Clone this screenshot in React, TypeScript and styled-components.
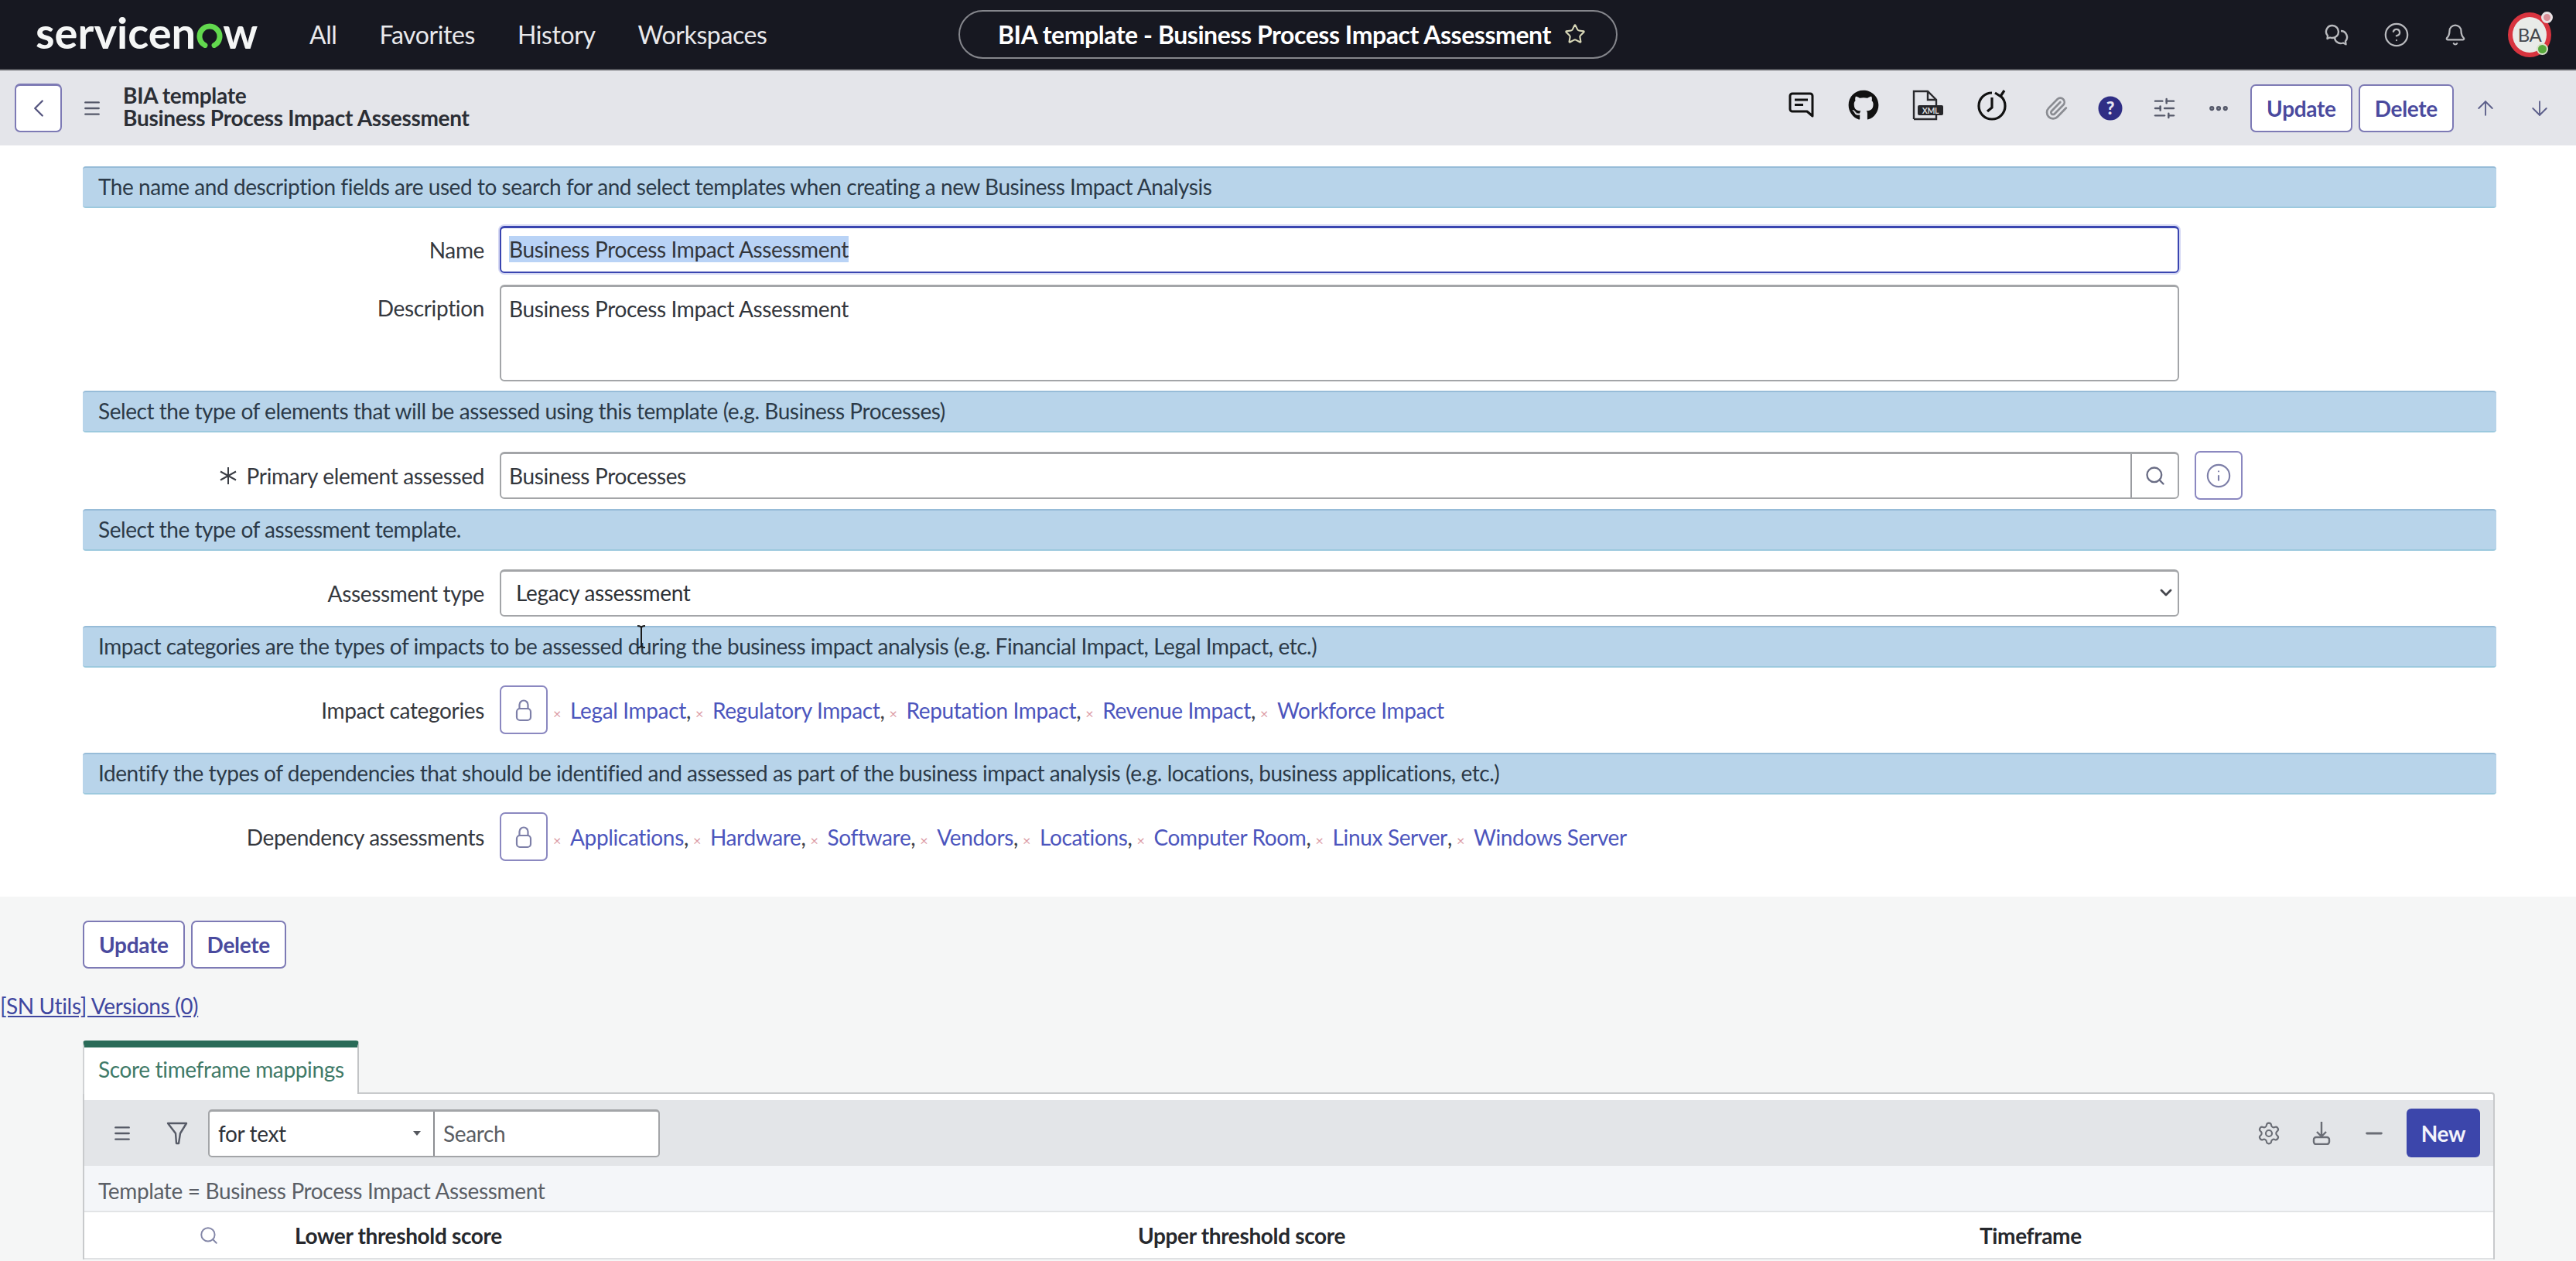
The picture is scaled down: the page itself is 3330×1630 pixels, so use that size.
import React from "react";
import styled, { createGlobalStyle } from "styled-components";
import { ArrowDown, ArrowUp, Bell, ChevronDown, ChevronLeft, CircleHelp, Ellipsis, Info, Menu, Minus, Paperclip, Search, Settings, SlidersHorizontal, Star } from "lucide-react";
import { FaGithub } from "react-icons/fa";

const GlobalStyle = createGlobalStyle`
    html, body {
        margin: 0;
        padding: 0;
        background: #fff;
        overflow: hidden;
    }
    * { box-sizing: border-box; }
    body {
        font-family: Lato, "Noto Sans", "Liberation Sans", sans-serif;
    }
`;

const Page = styled.div`
    position: relative;
    width: 3330px;
    height: 1630px;
    overflow: hidden;
    background: #fff;
    font-size: 28px;
    letter-spacing: -0.35px;
    color: #2e3238;
`;

/* top bar */
const TopBar = styled.header`
    height: 91px;
    background: #171821;
    color: #fff;
    display: grid;
    grid-template-columns: 1fr 852px 1fr;
    align-items: center;
    border-bottom: 2px solid #55565c;
`;

const TopLeft = styled.div`
    display: flex;
    align-items: center;
    padding-left: 46px;
`;

const Logo = styled.div`
    display: flex;
    align-items: center;
    width: 354px;
    font-size: 56px;
    font-weight: 700;
    letter-spacing: 0;
    line-height: 1;
    margin-top: -6px;
    color: #f5f6f6;
`;

const LogoO = styled.svg`
    width: 34px;
    height: 32px;
    margin: 9px 0 0 1px;
`;

const TopNav = styled.nav`
    display: flex;
    gap: 55px;
    font-size: 32px;
    letter-spacing: -0.4px;
    color: #e9e9ec;
`;

const Pill = styled.div`
    height: 63px;
    border: 2px solid #85868c;
    border-radius: 32px;
    display: flex;
    align-items: center;
    padding-left: 49px;
    gap: 17px;
    font-size: 32px;
    font-weight: 700;
    letter-spacing: -0.45px;
    margin-top: -1px;
`;

const TopRight = styled.div`
    display: flex;
    align-items: center;
    justify-content: flex-end;
    gap: 44px;
    padding-right: 32px;
    color: #b9babe;
`;

const Avatar = styled.div`
    position: relative;
    width: 56px;
    height: 58px;
    margin-left: 9px;
    border-radius: 50%;
    border: 6px solid #d8343f;
    background: #e9ebe8;
    color: #44474c;
    font-size: 24px;
    letter-spacing: -0.5px;
    display: flex;
    align-items: center;
    justify-content: center;
`;

const AvatarDot = styled.span`
    position: absolute;
    right: -2px;
    bottom: -3px;
    width: 15px;
    height: 15px;
    border-radius: 50%;
    background: #57a83c;
    border: 2px solid #d7e2c8;
`;

const AvatarTag = styled.span`
    position: absolute;
    right: -8px;
    top: -7px;
    width: 15px;
    height: 15px;
    border-radius: 50%;
    background: #d98f98;
    border: 3px solid #e9e2e4;
`;

/* form header */
const SubHeader = styled.div`
    height: 97px;
    background: #e4e5ea;
    display: flex;
    align-items: center;
    padding: 0 32px 0 19px;
`;

const BackButton = styled.button`
    width: 61px;
    height: 63px;
    padding: 0;
    background: #fff;
    border: 2px solid #7d7ab5;
    border-top-width: 3px;
    border-radius: 7px;
    color: #55557f;
    display: flex;
    align-items: center;
    justify-content: center;
`;

const TitleBlock = styled.div`
    font-weight: 700;
    line-height: 29px;
    margin: -3px 0 0 27px;
    font-size: 28px;
    letter-spacing: -0.3px;
    color: #2b2e35;
`;

const HamburgerHolder = styled.span`
    display: flex;
    margin-left: 26px;
    color: #55596a;
`;

const Spacer = styled.div`
    flex: 1;
`;

const ToolIcons = styled.div`
    display: flex;
    align-items: center;
    color: #111;
    margin-right: 6px;
`;

const ToolIcon = styled.span<{ $w: number; $color?: string; $lift?: boolean }>`
    width: ${(p) => p.$w}px;
    display: flex;
    justify-content: center;
    color: ${(p) => p.$color ?? "#111"};
    margin-top: ${(p) => (p.$lift ? -8 : 0)}px;
`;

const OutlineButton = styled.button`
    height: 62px;
    padding: 0 19px;
    background: #fff;
    border: 2px solid #7d7ab5;
    border-radius: 7px;
    color: #4a4a9e;
    font-family: inherit;
    font-size: 28px;
    font-weight: 700;
    letter-spacing: -0.3px;
`;

const ButtonPair = styled.div`
    display: flex;
    gap: 8px;
`;

const ArrowPair = styled.div`
    display: flex;
    gap: 40px;
    margin-left: 26px;
    color: #5c5f8a;
`;

/* form body */
const FormBody = styled.main`
    padding: 27px 103px 22px 107px;
    background: #fff;
`;

const Banner = styled.div`
    height: 54px;
    display: flex;
    align-items: center;
    padding: 0 0 2px 20px;
    background: #b8d4ea;
    border-radius: 4px;
    border-top: 2px solid #97bcd8;
    border-bottom: 2px solid #9cc9de;
    color: #2c3a48;
    letter-spacing: -0.45px;
`;

const Row = styled.div<{ $mt?: number; $mb?: number }>`
    display: grid;
    grid-template-columns: 519px 2171px auto;
    column-gap: 20px;
    align-items: center;
    margin: ${(p) => p.$mt ?? 24}px 0 ${(p) => p.$mb ?? 12}px;
`;

const Label = styled.label<{ $top?: boolean }>`
    text-align: right;
    color: #35383e;
    align-self: ${(p) => (p.$top ? "start" : "center")};
    padding-top: ${(p) => (p.$top ? 13 : 0)}px;
    display: flex;
    justify-content: flex-end;
    align-items: center;
    gap: 12px;
`;

const Field = styled.div<{ $focus?: boolean; $h?: number; $top?: boolean }>`
    height: ${(p) => p.$h ?? 61}px;
    background: #fff;
    border: 2px solid ${(p) => (p.$focus ? "#3a45b0" : "#a3a5a8")};
    border-top-width: 3px;
    border-radius: 6px;
    padding: ${(p) => (p.$top ? "11px" : "0")} 10px ${(p) => (p.$top ? "0" : "2px")};
    display: flex;
    align-items: ${(p) => (p.$top ? "flex-start" : "center")};
    color: #33363c;
    box-shadow: ${(p) => (p.$focus ? "0 0 0 2px #d5d8f4" : "none")};
`;

const Selected = styled.span`
    background: #b9d3f6;
`;

const LookupField = styled(Field)`
    padding-right: 0;
    padding-bottom: 0;
    justify-content: space-between;
`;

const LookupButton = styled.span`
    width: 61px;
    height: 100%;
    border-left: 2px solid #9a9ca0;
    display: flex;
    align-items: center;
    justify-content: center;
    color: #6a6d85;
`;

const SelectField = styled(Field)`
    justify-content: space-between;
    padding-left: 19px;
    padding-right: 3px;
    color: #2e3136;
`;

const IconButton = styled.button`
    width: 62px;
    height: 63px;
    padding: 0;
    background: #fff;
    border: 2px solid #8b88c0;
    border-radius: 7px;
    color: #7d7fa8;
    display: flex;
    align-items: center;
    justify-content: center;
`;

const ListRow = styled.div`
    display: grid;
    grid-template-columns: 519px auto 1fr;
    column-gap: 20px;
    align-items: center;
    margin: 23px 0 24px;
`;

const Tags = styled.div`
    display: flex;
    align-items: center;
    margin-left: -13px;
`;

const Tag = styled.span`
    display: flex;
    align-items: baseline;
    color: #4c55bd;
    white-space: nowrap;
`;

const TagX = styled.span`
    color: #dc9ca6;
    font-size: 18px;
    width: 22px;
`;

const TagComma = styled.span`
    color: #3c3f48;
    width: 11px;
    margin-right: 1px;
`;

/* related list */
const Lower = styled.section`
    background: #f5f6f6;
    height: 500px;
    padding-top: 31px;
`;

const LowerButtons = styled(ButtonPair)`
    padding-left: 107px;
`;

const VersionsLink = styled.a`
    display: block;
    margin-top: 32px;
    color: #3f47a0;
    text-decoration: underline;
    line-height: 32px;
`;

const TabArea = styled.div`
    margin: 29px 0 0 107px;
    width: 3118px;
`;

const Tab = styled.div`
    width: 357px;
    height: 69px;
    background: #fff;
    border-top: 9px solid #2a6b58;
    border-left: 2px solid #d0d2d4;
    border-right: 2px solid #c2c4c6;
    border-radius: 4px 4px 0 0;
    margin-bottom: -2px;
    position: relative;
    z-index: 1;
    display: flex;
    align-items: center;
    padding: 0 0 4px 18px;
    color: #3f7a68;
`;

const Panel = styled.div`
    background: #fff;
    border: 2px solid #c8cacc;
    border-bottom: none;
    border-radius: 0 4px 0 0;
    padding-top: 8px;
`;

const ListToolbar = styled.div`
    height: 85px;
    background: #e3e5e8;
    display: flex;
    align-items: center;
    padding: 0 17px 0 36px;
    color: #565a66;
`;

const FilterHolder = styled.span`
    display: flex;
    margin-left: 44px;
`;

const SearchCombo = styled.div`
    display: flex;
    width: 584px;
    height: 62px;
    margin-left: 26px;
    background: #fff;
    border: 2px solid #a3a5a8;
    border-top-width: 3px;
    border-radius: 5px;
`;

const ForText = styled.div`
    width: 291px;
    border-right: 2px solid #8c8e92;
    display: flex;
    align-items: center;
    justify-content: space-between;
    padding: 0 16px 0 11px;
    color: #2f3238;
`;

const Caret = styled.span`
    width: 0;
    height: 0;
    border-left: 5px solid transparent;
    border-right: 5px solid transparent;
    border-top: 6px solid #55585e;
`;

const SearchText = styled.div`
    padding-left: 11px;
    display: flex;
    align-items: center;
    color: #5a5d63;
`;

const ToolbarIcons = styled.div`
    display: flex;
    align-items: center;
    gap: 40px;
    margin-right: 26px;
    color: #6a6d75;
`;

const NewButton = styled.button`
    width: 95px;
    height: 63px;
    background: #3c46ab;
    border: none;
    border-radius: 6px;
    color: #f2f3fb;
    font-family: inherit;
    font-size: 28px;
    font-weight: 700;
    letter-spacing: -0.3px;
`;

const Breadcrumb = styled.div`
    height: 60px;
    background: #f4f6f9;
    display: flex;
    align-items: center;
    padding: 5px 0 0 18px;
    border-bottom: 2px solid #e2e4e6;
    color: #5b5f66;
`;

const ColumnHead = styled.div`
    height: 61px;
    display: grid;
    grid-template-columns: 272px 1090px 1088px 1fr;
    align-items: center;
    border-bottom: 2px solid #dfe1e3;
    font-weight: 700;
    color: #26282d;
`;

const ColumnSearch = styled.span`
    justify-self: end;
    margin-right: 98px;
    display: flex;
    color: #8487a8;
`;

const IBeam = styled.svg`
    position: absolute;
    left: 823px;
    top: 808px;
`;

function ChatIcon() {
    return (
        <svg width="32" height="28" viewBox="0 0 32 28" fill="none" stroke="currentColor" strokeWidth="2.400" strokeLinejoin="round">
            <path d="M10 2a8 8 0 0 0-6 13.300L3.500 19l3.500-1.500a8 8 0 0 0 3 .5 8 8 0 0 0 0-16z" />
            <path d="M21 9a8 8 0 0 1 6 13.300l.5 4-3.500-1.800a8 8 0 0 1-11-7" />
        </svg>
    );
}

function CommentIcon() {
    return (
        <svg width="33" height="33" viewBox="0 0 33 33" fill="none" stroke="currentColor" strokeWidth="3">
            <path d="M5 2h23a3 3 0 0 1 3 3v26l-7-6H5a3 3 0 0 1-3-3V5a3 3 0 0 1 3-3z" strokeLinejoin="round" />
            <path d="M8 10h17M8 16.500h11" strokeWidth="2.800" />
        </svg>
    );
}

function XmlIcon() {
    return (
        <svg width="40" height="40" viewBox="0 0 40 40" fill="none" stroke="#2a2a2e" strokeWidth="2.400">
            <path d="M2 38V2h18l11 11v9M20 2v11h11M2 38h29v-6" />
            <rect x="7" y="20" width="33" height="13" fill="#26262a" rx="2" stroke="none" />
            <text x="23.500" y="30.500" textAnchor="middle" fontSize="10.500" fontWeight="700" fill="#d8d8dc" stroke="none" fontFamily="Lato, sans-serif">XML</text>
        </svg>
    );
}

function HistoryIcon() {
    return (
        <svg width="40" height="40" viewBox="0 0 40 40" fill="none" stroke="#111" strokeWidth="3.200">
            <path d="M20 4A17 17 0 1 0 37 21 17 17 0 0 0 31 8" />
            <path d="M24 4l7 4.500L36 1" strokeLinejoin="round" />
            <path d="M20 10v13l-6 5" />
        </svg>
    );
}

function HelpBadge() {
    return (
        <svg width="32" height="34" viewBox="0 0 32 34">
            <circle cx="16" cy="17" r="15.500" fill="#2f2e85" />
            <text x="16" y="25" textAnchor="middle" fontSize="23" fontWeight="900" fill="#e6e6f3" fontFamily="Lato, sans-serif">?</text>
        </svg>
    );
}

function LockIcon() {
    return (
        <svg width="30" height="32" viewBox="0 0 30 32" fill="none" stroke="currentColor" strokeWidth="2.200">
            <rect x="6" y="14" width="18" height="15" rx="4" />
            <path d="M9.500 14V9a5.500 5.500 0 0 1 11 0v5" />
        </svg>
    );
}

function FunnelIcon() {
    return (
        <svg width="28" height="30" viewBox="0 0 28 30" fill="none" stroke="currentColor" strokeWidth="2.400" strokeLinejoin="round">
            <path d="M2 2h24L18 15l-2 13h-3l-1-13z" />
        </svg>
    );
}

function DownloadTray() {
    return (
        <svg width="24" height="30" viewBox="0 0 24 30" fill="none" stroke="currentColor" strokeWidth="2.400">
            <path d="M12 0v19M6 13l6 6 6-6" />
            <rect x="2" y="20" width="20" height="9" rx="3" />
        </svg>
    );
}

const impactTags = ["Legal Impact", "Regulatory Impact", "Reputation Impact", "Revenue Impact", "Workforce Impact"];
const dependencyTags = ["Applications", "Hardware", "Software", "Vendors", "Locations", "Computer Room", "Linux Server", "Windows Server"];

function TagList({ items }: { items: string[] }) {
    return (
        <Tags>
            {items.map((t, i) => (
                <Tag key={t}>
                    <TagX>×</TagX>
                    {t}
                    {i < items.length - 1 && <TagComma>,</TagComma>}
                </Tag>
            ))}
        </Tags>
    );
}

export default function App() {
    return (
        <Page>
            <GlobalStyle />
            <TopBar>
                <TopLeft>
                    <Logo>
                        servicen
                        <LogoO viewBox="0 0 34 32" fill="none">
                            <path d="M10.900 28.500A13 13 0 1 1 23.100 28.500" stroke="#62d84e" strokeWidth="7" strokeLinecap="round" />
                        </LogoO>
                        w
                    </Logo>
                    <TopNav>
                        <span>All</span>
                        <span>Favorites</span>
                        <span>History</span>
                        <span>Workspaces</span>
                    </TopNav>
                </TopLeft>
                <Pill>
                    BIA template - Business Process Impact Assessment
                    <Star size={28} color="#d9d8b8" strokeWidth={1.800} />
                </Pill>
                <TopRight>
                    <ChatIcon />
                    <CircleHelp size={34} strokeWidth={1.600} />
                    <Bell size={30} strokeWidth={1.800} />
                    <Avatar>
                        BA
                        <AvatarTag />
                        <AvatarDot />
                    </Avatar>
                </TopRight>
            </TopBar>

            <SubHeader>
                <BackButton aria-label="Back">
                    <ChevronLeft size={38} strokeWidth={1.500} />
                </BackButton>
                <HamburgerHolder>
                    <Menu size={26} strokeWidth={2.200} />
                </HamburgerHolder>
                <TitleBlock>
                    BIA template
                    <br />
                    Business Process Impact Assessment
                </TitleBlock>
                <Spacer />
                <ToolIcons>
                    <ToolIcon $w={66} $lift><CommentIcon /></ToolIcon>
                    <ToolIcon $w={96} $lift><FaGithub size={40} /></ToolIcon>
                    <ToolIcon $w={70} $lift><XmlIcon /></ToolIcon>
                    <ToolIcon $w={96} $lift><HistoryIcon /></ToolIcon>
                    <ToolIcon $w={70} $color="#8a8c92"><Paperclip size={32} strokeWidth={2} /></ToolIcon>
                    <ToolIcon $w={70}><HelpBadge /></ToolIcon>
                    <ToolIcon $w={70} $color="#55596a"><SlidersHorizontal size={32} strokeWidth={1.800} /></ToolIcon>
                    <ToolIcon $w={70} $color="#55596a"><Ellipsis size={30} strokeWidth={3} /></ToolIcon>
                </ToolIcons>
                <ButtonPair>
                    <OutlineButton>Update</OutlineButton>
                    <OutlineButton>Delete</OutlineButton>
                </ButtonPair>
                <ArrowPair>
                    <ArrowUp size={30} strokeWidth={1.500} />
                    <ArrowDown size={30} strokeWidth={1.500} />
                </ArrowPair>
            </SubHeader>

            <FormBody>
                <Banner>The name and description fields are used to search for and select templates when creating a new Business Impact Analysis</Banner>
                <Row $mt={23} $mb={15}>
                    <Label>Name</Label>
                    <Field $focus>
                        <Selected>Business Process Impact Assessment</Selected>
                    </Field>
                </Row>
                <Row $mt={15} $mb={12}>
                    <Label $top>Description</Label>
                    <Field $h={125} $top>Business Process Impact Assessment</Field>
                </Row>
                <Banner>Select the type of elements that will be assessed using this template (e.g. Business Processes)</Banner>
                <Row>
                    <Label>
                        <svg width="24" height="24" viewBox="0 0 24 24" stroke="#3a3d44" strokeWidth="2">
                            <path d="M12 1v22M2 6.500l20 11M22 6.500l-20 11" />
                        </svg>
                        Primary element assessed
                    </Label>
                    <LookupField>
                        Business Processes
                        <LookupButton>
                            <Search size={28} strokeWidth={2} />
                        </LookupButton>
                    </LookupField>
                    <IconButton aria-label="Info">
                        <Info size={34} strokeWidth={1.500} />
                    </IconButton>
                </Row>
                <Banner>Select the type of assessment template.</Banner>
                <Row>
                    <Label>Assessment type</Label>
                    <SelectField>
                        Legacy assessment
                        <ChevronDown size={24} color="#44464c" strokeWidth={2.800} />
                    </SelectField>
                </Row>
                <Banner>Impact categories are the types of impacts to be assessed during the business impact analysis (e.g. Financial Impact, Legal Impact, etc.)</Banner>
                <ListRow>
                    <Label>Impact categories</Label>
                    <IconButton aria-label="Unlock">
                        <LockIcon />
                    </IconButton>
                    <TagList items={impactTags} />
                </ListRow>
                <Banner>Identify the types of dependencies that should be identified and assessed as part of the business impact analysis (e.g. locations, business applications, etc.)</Banner>
                <ListRow>
                    <Label>Dependency assessments</Label>
                    <IconButton aria-label="Unlock">
                        <LockIcon />
                    </IconButton>
                    <TagList items={dependencyTags} />
                </ListRow>
            </FormBody>

            <Lower>
                <LowerButtons>
                    <OutlineButton>Update</OutlineButton>
                    <OutlineButton>Delete</OutlineButton>
                </LowerButtons>
                <VersionsLink>[SN Utils] Versions (0)</VersionsLink>
                <TabArea>
                    <Tab>Score timeframe mappings</Tab>
                    <Panel>
                        <ListToolbar>
                            <Menu size={26} strokeWidth={2.200} />
                            <FilterHolder>
                                <FunnelIcon />
                            </FilterHolder>
                            <SearchCombo>
                                <ForText>
                                    for text
                                    <Caret />
                                </ForText>
                                <SearchText>Search</SearchText>
                            </SearchCombo>
                            <Spacer />
                            <ToolbarIcons>
                                <Settings size={32} strokeWidth={1.600} />
                                <DownloadTray />
                                <Minus size={32} strokeWidth={2.200} />
                            </ToolbarIcons>
                            <NewButton>New</NewButton>
                        </ListToolbar>
                        <Breadcrumb>Template = Business Process Impact Assessment</Breadcrumb>
                        <ColumnHead>
                            <ColumnSearch>
                                <Search size={26} strokeWidth={1.800} />
                            </ColumnSearch>
                            <span>Lower threshold score</span>
                            <span>Upper threshold score</span>
                            <span>Timeframe</span>
                        </ColumnHead>
                    </Panel>
                </TabArea>
            </Lower>

            <IBeam width="12" height="30" viewBox="0 0 12 30" fill="none" stroke="#1a1a1a" strokeWidth="2">
                <path d="M1 1c3 0 5 1 5 3v22c0 2-2 3-5 3M11 1c-3 0-5 1-5 3v22c0 2 2 3 5 3" />
            </IBeam>
        </Page>
    );
}
